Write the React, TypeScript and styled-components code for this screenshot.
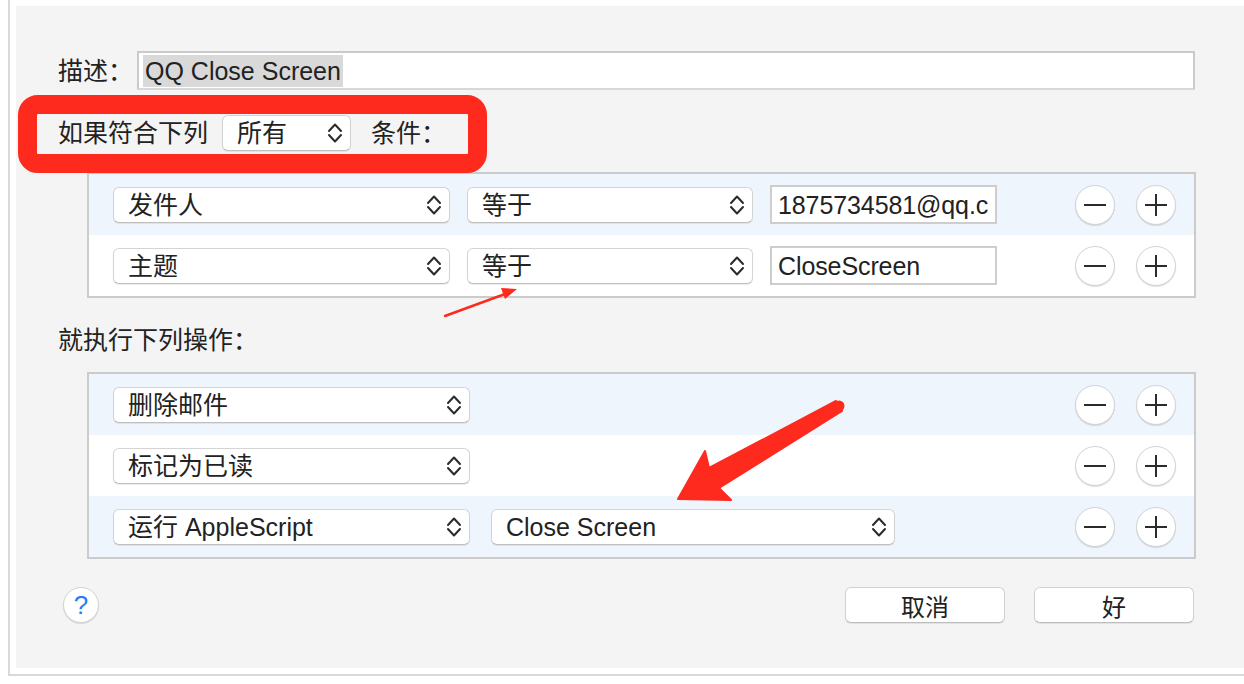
import React from "react";
import styled, { createGlobalStyle } from "styled-components";

const GlobalStyle = createGlobalStyle`
  html, body { margin: 0; padding: 0; background: #ffffff; }
  body {
    font-family: "Liberation Sans", "Noto Sans CJK SC", sans-serif;
    color: #222222;
  }
  * { box-sizing: border-box; }
`;

const Frame = styled.div`
  margin-left: 8px;
  width: 1236px;
  height: 676px;
  border-left: 2px solid #d9d9d9;
  border-bottom: 2px solid #d9d9d9;
  padding: 6px 0 6px 6px;
  background: #ffffff;
  overflow: hidden;
`;

const Panel = styled.div`
  position: relative;
  height: 662px;
  background: #f4f4f4;
  padding: 45px 48px 0 42px;
  display: flex;
  flex-direction: column;
`;

const Text = styled.span`
  font-size: 25px;
  line-height: 30px;
  white-space: nowrap;
`;

const DescRow = styled.div`
  display: flex;
  align-items: center;
  gap: 4px;
  height: 39px;
`;

const DescInput = styled.div`
  flex: 1;
  height: 39px;
  margin-right: 1px;
  background: #ffffff;
  border: 2px solid #cacaca;
  border-bottom-color: #d8d8d8;
  padding: 0 4px;
  display: flex;
  align-items: center;
`;

const Selected = styled.span`
  background: #d9d9d9;
  padding: 0 2px;
  font-size: 25px;
  line-height: 32px;
  white-space: nowrap;
`;

const HeaderRow = styled.div`
  position: relative;
  margin-top: 25px;
  height: 36px;
  display: flex;
  align-items: center;
`;

const RedBox = styled.div`
  position: absolute;
  left: -40px;
  top: -20px;
  width: 469px;
  height: 78px;
  border: 19px solid #fe2a1e;
  border-radius: 20px;
  pointer-events: none;
  z-index: 5;
`;

const PopupBox = styled.div<{ $w: number; $ml?: number }>`
  width: ${(p) => p.$w}px;
  margin-left: ${(p) => p.$ml ?? 0}px;
  height: 36px;
  flex: none;
  display: flex;
  align-items: center;
  justify-content: space-between;
  padding: 0 7px 0 14px;
  background: #ffffff;
  border: 1px solid #d4d4d4;
  border-bottom-color: #bfbfbf;
  border-radius: 6px;
  box-shadow: 0 1px 1px rgba(0, 0, 0, 0.08);
`;

const ChevronSvg = styled.svg`
  flex: none;
  width: 16px;
  height: 24px;
`;

const Chevron = () => (
  <ChevronSvg viewBox="0 0 16 24" fill="none">
    <path d="M2 10 L8 3.5 L14 10" stroke="#2b2b2b" strokeWidth="2" strokeLinecap="round" strokeLinejoin="round" />
    <path d="M2 14 L8 20.5 L14 14" stroke="#2b2b2b" strokeWidth="2" strokeLinecap="round" strokeLinejoin="round" />
  </ChevronSvg>
);

const Popup = ({ w, ml, children }: { w: number; ml?: number; children: React.ReactNode }) => (
  <PopupBox $w={w} $ml={ml}>
    <Text>{children}</Text>
    <Chevron />
  </PopupBox>
);

const RuleBox = styled.div<{ $mt: number }>`
  margin-top: ${(p) => p.$mt}px;
  margin-left: 29px;
  border: 2px solid #cbcbcb;
  background: #ffffff;
  display: flex;
  flex-direction: column;
`;

const RuleRow = styled.div<{ $alt: boolean }>`
  height: 61px;
  display: flex;
  align-items: center;
  padding: 0 18px 0 24px;
  background: ${(p) => (p.$alt ? "#eef5fd" : "#ffffff")};
`;

const TextField = styled.div`
  width: 227px;
  height: 39px;
  margin-left: 17px;
  flex: none;
  background: #ffffff;
  border: 2px solid #cdcdcd;
  padding: 0 0 0 6px;
  display: flex;
  align-items: center;
  overflow: hidden;
`;

const FieldText = styled.span`
  font-size: 25px;
  line-height: 30px;
  white-space: nowrap;
  letter-spacing: -0.1px;
`;

const RoundGroup = styled.div`
  margin-left: auto;
  display: flex;
  gap: 21px;
`;

const RoundButton = styled.div`
  width: 40px;
  height: 40px;
  border-radius: 50%;
  background: #ffffff;
  border: 1px solid #d3d3d3;
  box-shadow: 0 1px 1px rgba(0, 0, 0, 0.12);
  display: flex;
  align-items: center;
  justify-content: center;
`;

const MinusIcon = () => (
  <svg width="24" height="24" viewBox="0 0 24 24">
    <path d="M1 12 H23" stroke="#2b2b2b" strokeWidth="2" />
  </svg>
);

const PlusIcon = () => (
  <svg width="24" height="24" viewBox="0 0 24 24">
    <path d="M1 12 H23 M12 1 V23" stroke="#2b2b2b" strokeWidth="2" />
  </svg>
);

const AddRemove = () => (
  <RoundGroup>
    <RoundButton>
      <MinusIcon />
    </RoundButton>
    <RoundButton>
      <PlusIcon />
    </RoundButton>
  </RoundGroup>
);

const SectionLabel = styled.div`
  margin-top: 30px;
  height: 24px;
  font-size: 25px;
  line-height: 24px;
  white-space: nowrap;
`;

const Footer = styled.div`
  margin-top: 28px;
  height: 36px;
  display: flex;
  align-items: center;
`;

const HelpButton = styled.div`
  margin-left: 5px;
  width: 36px;
  height: 36px;
  border-radius: 50%;
  background: #ffffff;
  border: 1px solid #d3d3d3;
  box-shadow: 0 1px 1px rgba(0, 0, 0, 0.12);
  display: flex;
  align-items: center;
  justify-content: center;
  color: #1e7ef5;
  font-size: 26px;
  line-height: 1;
`;

const PushButton = styled.div<{ $first?: boolean }>`
  width: 160px;
  height: 36px;
  margin-left: ${(p) => (p.$first ? "auto" : "29px")};
  margin-right: ${(p) => (p.$first ? "0" : "2px")};
  border-radius: 6px;
  background: #ffffff;
  border: 1px solid #d2d2d2;
  border-bottom-color: #bdbdbd;
  box-shadow: 0 1px 1px rgba(0, 0, 0, 0.08);
  display: flex;
  align-items: center;
  justify-content: center;
  font-size: 24px;
`;

const Annotations = styled.svg`
  position: absolute;
  left: 0;
  top: 0;
  width: 100%;
  height: 100%;
  pointer-events: none;
  z-index: 6;
`;

export default function App() {
  return (
    <>
      <GlobalStyle />
      <Frame>
        <Panel>
          <DescRow>
            <Text>描述：</Text>
            <DescInput>
              <Selected>QQ Close Screen</Selected>
            </DescInput>
          </DescRow>

          <HeaderRow>
            <Text>如果符合下列</Text>
            <Popup w={129} ml={14}>所有</Popup>
            <Text style={{ marginLeft: 20 }}>条件：</Text>
            <RedBox />
          </HeaderRow>

          <RuleBox $mt={21}>
            <RuleRow $alt>
              <Popup w={337}>发件人</Popup>
              <Popup w={286} ml={17}>等于</Popup>
              <TextField>
                <FieldText>1875734581@qq.c</FieldText>
              </TextField>
              <AddRemove />
            </RuleRow>
            <RuleRow $alt={false}>
              <Popup w={337}>主题</Popup>
              <Popup w={286} ml={17}>等于</Popup>
              <TextField>
                <FieldText>CloseScreen</FieldText>
              </TextField>
              <AddRemove />
            </RuleRow>
          </RuleBox>

          <SectionLabel>就执行下列操作：</SectionLabel>

          <RuleBox $mt={20}>
            <RuleRow $alt>
              <Popup w={357}>删除邮件</Popup>
              <AddRemove />
            </RuleRow>
            <RuleRow $alt={false}>
              <Popup w={357}>标记为已读</Popup>
              <AddRemove />
            </RuleRow>
            <RuleRow $alt>
              <Popup w={357}>运行 AppleScript</Popup>
              <Popup w={404} ml={21}>Close Screen</Popup>
              <AddRemove />
            </RuleRow>
          </RuleBox>

          <Footer>
            <HelpButton>?</HelpButton>
            <PushButton $first>取消</PushButton>
            <PushButton>好</PushButton>
          </Footer>

          <Annotations viewBox="16 6 1228 662" preserveAspectRatio="none">
            <path d="M445 316 L505 294" stroke="#fe2a1e" strokeWidth="2.4" strokeLinecap="round" />
            <polygon points="517,289 505,299 501,288" fill="#fe2a1e" />
            <polygon
              points="678,499 705,451 709,468 836,401 842,411 719,488 731,500"
              fill="#fe2a1e"
              stroke="#fe2a1e"
              strokeWidth="2"
              strokeLinejoin="round"
            />
            <circle cx="839" cy="406" r="5.5" fill="#fe2a1e" />
          </Annotations>
        </Panel>
      </Frame>
    </>
  );
}
